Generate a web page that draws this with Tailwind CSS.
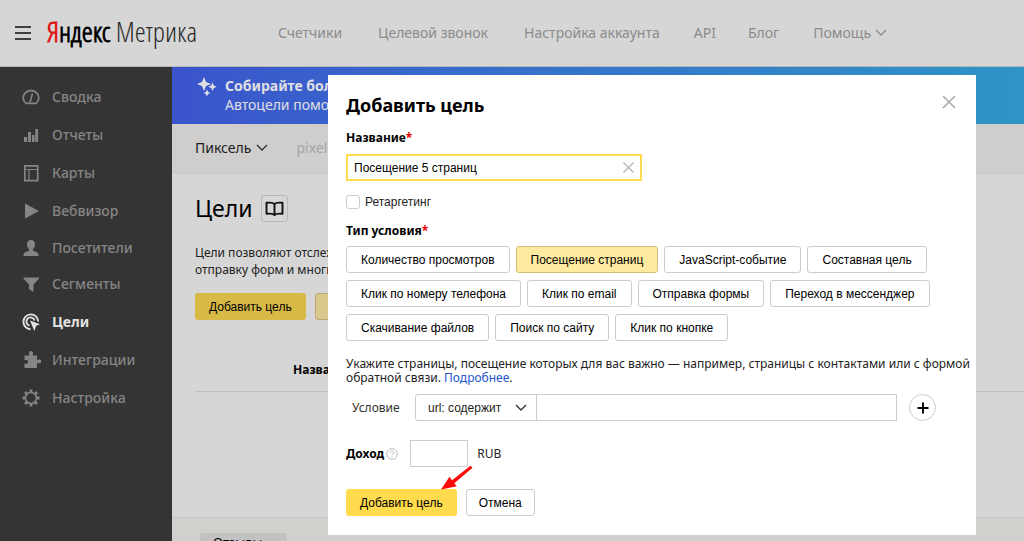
<!DOCTYPE html>
<html lang="ru">
<head>
<meta charset="utf-8">
<title>Яндекс Метрика — Цели</title>
<meta name="viewport" content="width=device-width, initial-scale=1">
<script src="https://cdn.jsdelivr.net/npm/@tailwindcss/browser@4"></script>
</head>
<body class="relative flex h-screen flex-col overflow-hidden bg-[#d6d6d6] font-['Noto_Sans','Open_Sans',sans-serif] text-xs text-black">

<header class="flex h-[67px] shrink-0 items-center border-b border-[#b4b8ba] pl-[15px]">
  <button type="button" aria-label="Меню" class="mr-4">
    <svg class="block" width="16" height="16" viewBox="0 0 16 16" stroke="#0c0c0c" stroke-width="1.7"><path d="M0 2h16M0 8h16M0 14h16"/></svg>
  </button>
  <a href="#" class="mb-1 w-[218px] shrink-0 whitespace-nowrap font-['Noto_Sans_ExtraCondensed','Open_Sans_Condensed_Light','Liberation_Sans_Narrow',sans-serif] text-[28px] leading-8 text-[#2a2a2a]"><span class="font-semibold text-black"><span class="text-[#e01818]">Я</span>ндекс</span> <span class="font-light">Метрика</span></a>
  <nav class="flex items-center whitespace-nowrap text-sm text-[#8b8b8b]">
    <a href="#" class="ml-[13px]">Счетчики</a>
    <a href="#" class="ml-9">Целевой звонок</a>
    <a href="#" class="ml-9">Настройка аккаунта</a>
    <a href="#" class="ml-[34px]">API</a>
    <a href="#" class="ml-8">Блог</a>
    <a href="#" class="ml-[34px] flex items-center gap-1">Помощь
      <svg width="12" height="8" viewBox="0 0 12 8" fill="none" stroke="#8b8b8b" stroke-width="1.3"><path d="M1 1l5 5 5-5"/></svg></a>
  </nav>
</header>

<div class="flex min-h-0 flex-1">
  <aside class="w-[172px] shrink-0 bg-[#343434] pt-[11px]">
    <nav class="flex flex-col text-sm font-medium text-[#858585]">
      <a href="#" class="flex h-[38px] items-center gap-3 pl-[22px]">
        <svg width="18" height="18" viewBox="0 0 18 18" fill="none" stroke="currentColor" stroke-width="1.8"><path d="M4 15.400A7.800 7.300 0 1 1 14 15.400Z" stroke-linejoin="round"/><path d="M8 14.5L10.5 5.5" stroke-width="1.6"/></svg>Сводка</a>
      <a href="#" class="flex h-[38px] items-center gap-3 pl-[22px]">
        <svg width="18" height="18" viewBox="0 0 18 18" fill="currentColor"><path d="M2 11h3v5H2zM6 6h3v10H6zM10 9h2.6v7H10zM13.3 3H16v13h-2.700z"/></svg>Отчеты</a>
      <a href="#" class="flex h-[38px] items-center gap-3 pl-[22px]">
        <svg width="18" height="18" viewBox="0 0 18 18" fill="none" stroke="currentColor"><path d="M2.800 1.800h12.900v14.900H2.800z" stroke-width="1.7"/><path d="M2 5.500h14M7 5.500V16" stroke-width="1.200"/></svg>Карты</a>
      <a href="#" class="flex h-[38px] items-center gap-3 pl-[22px]">
        <svg width="18" height="18" viewBox="0 0 18 18" fill="currentColor"><path d="M3 1.500L17 9 3 16.500z"/></svg>Вебвизор</a>
      <a href="#" class="flex h-9 items-center gap-3 pl-[22px]">
        <svg width="18" height="18" viewBox="0 0 18 18" fill="currentColor"><path d="M9 1c2.500 0 4 1.600 4 4.200 0 2-.8 3.800-2 4.800v1.600c0 .8 5.500 1.200 5.500 4.400v1h-15v-1C1.500 12.800 7 12.400 7 11.600V10C5.800 9 5 7.200 5 5.200 5 2.600 6.500 1 9 1z"/></svg>Посетители</a>
      <a href="#" class="flex h-9 items-center gap-3 pl-[22px]">
        <svg width="18" height="18" viewBox="0 0 18 18" fill="currentColor"><path d="M1.500 2.500h15.500v1L11.500 9.500v7.500L7 14V9.500L1.500 3.500z"/></svg>Сегменты</a>
      <a href="#" aria-current="page" class="mt-px flex h-[38px] items-center gap-3 pl-[22px] font-bold text-[#e2e2e2]">
        <svg width="18" height="18" viewBox="0 0 18 18" fill="none" stroke="currentColor" stroke-width="1.900"><path d="M8.500 16.200A7.400 7.400 0 1 1 16.200 8.500"/><path d="M7.500 12.700A4.200 4.200 0 1 1 12.600 7.500"/><path d="M8 7.500l10 3.800-3.800 1.500L12.300 18z" fill="currentColor" stroke="none"/></svg>Цели</a>
      <a href="#" class="flex h-[38px] items-center gap-3 pl-[22px]">
        <svg width="19" height="18" viewBox="0 0 19 18" class="-mr-px" fill="currentColor"><path d="M2.500 4.500h4.700V3.200a2.100 2.100 0 1 1 3.600 0v1.300H15v4.200h1.300a2 2 0 1 1 0 3.400H15v4.900H2.500v-4.300h1.700a1.900 1.900 0 1 0 0-3.800H2.500z"/></svg>Интеграции</a>
      <a href="#" class="flex h-[38px] items-center gap-3 pl-[22px]">
        <svg width="18" height="18" viewBox="0 0 18 18" fill="none" stroke="currentColor"><circle cx="9" cy="9" r="5.500" stroke-width="1.600"/><path d="M9 .5v3M9 14.500v3M.5 9h3M14.500 9h3M3 3l2 2M13 13l2 2M3 15l2-2M13 5l2-2" stroke-width="2.800"/></svg>Настройка</a>
    </nav>
  </aside>

  <main class="flex min-w-0 flex-1 flex-col whitespace-nowrap">
    <section class="flex h-[57px] shrink-0 gap-2 bg-linear-to-r from-[#3b54cc] to-[#2f94c6] pt-[9px] pl-[25px] text-sm leading-[19px] text-[#e0e0e4]">
      <svg class="mt-px" width="20" height="20" viewBox="0 0 20 20" fill="currentColor"><path d="M7 0l2 5 5 2-5 2-2 5-2-5-5-2 5-2zM15.500 5.500l1.300 3 3 1.300-3 1.300-1.300 3-1.300-3-3-1.300 3-1.300zM10 12.500l1.100 2.400 2.400 1.100-2.400 1.100L10 19.500l-1.100-2.400L6.500 16l2.400-1.100z"/></svg>
      <p><b>Собирайте больше</b><br>Автоцели помогут</p>
    </section>
    <section class="flex h-[50px] shrink-0 items-center border-b border-[#c9c9c9] bg-[#cfcecd] pb-px pl-[23px] text-sm">
      <button type="button" class="flex items-center gap-[5px] text-[#1c1c1c]">Пиксель
        <svg width="12" height="8" viewBox="0 0 12 8" fill="none" stroke="#333" stroke-width="1.400"><path d="M1 1l5 5 5-5"/></svg></button>
      <span class="ml-7 text-[#a5a5a5]">pixel</span>
    </section>
    <div class="flex-1 pt-5 pl-[23px]">
      <div class="flex items-center gap-[9px]">
        <h1 class="text-[23px] leading-7">Цели</h1>
        <button type="button" aria-label="Документация" class="flex size-[27px] items-center justify-center rounded-[3px] border border-[#b9b9b9]">
          <svg width="19" height="15" viewBox="0 0 19 15" fill="none" stroke="#111" stroke-width="1.900" stroke-linejoin="round"><path d="M9.500 3C8 1.500 4 1.500 1.500 1.800v11c2.500-.3 6.500-.3 8 1.200 1.500-1.500 5.500-1.500 8-1.200v-11C15 1.500 11 1.500 9.500 3zM9.500 3v10.500"/></svg></button>
      </div>
      <p class="mt-[22px] text-xs leading-[17px] text-[#222]">Цели позволяют отслеживать<br>отправку форм и многие</p>
      <div class="mt-[15px] flex gap-[9px] font-['Liberation_Sans',sans-serif]">
        <button type="button" class="h-[27px] rounded-[3px] bg-[#d8b945] px-[14px]">Добавить цель</button>
        <button type="button" aria-label="Импорт целей" class="h-[27px] w-24 rounded-[3px] border border-[#bca675] bg-[#d8c88c]"></button>
      </div>
      <table class="mt-[35px] w-full border-b border-[#bfbfbf]">
        <thead><tr><th scope="col" class="h-9 pl-[98px] pb-[6px] text-left text-xs font-bold">Название</th></tr></thead>
      </table>
    </div>
    <footer class="h-6 shrink-0 border-t border-[#c4c4c0] bg-[#d0d0cc] pt-[15px] pl-7">
      <div class="flex h-6 w-[87px] rounded-[3px] bg-[#c3c2c2] px-[13px] pt-px text-[13px]">Отзывы</div>
    </footer>
  </main>
</div>

<div role="dialog" aria-labelledby="dlg" class="absolute top-[75px] right-12 left-[328px] bg-white px-[18px] pb-[19px]">
  <div class="flex items-center justify-between pt-[15px]">
    <h2 id="dlg" class="text-lg leading-[30px] font-bold">Добавить цель</h2>
    <button type="button" aria-label="Закрыть" class="-mt-[6px]"><svg width="16" height="16" viewBox="0 0 16 16" stroke="#aaa" stroke-width="1.600"><path d="M1 2l12 12M13 2L1 14"/></svg></button>
  </div>
  <form>
    <label for="name" class="mt-[9px] block leading-[18px] font-bold">Название<span class="text-[#e00]">*</span></label>
    <div class="relative mt-[7px] w-[296px]">
      <input id="name" type="text" value="Посещение 5 страниц" class="block h-[27px] w-full border-2 border-[#ffdb4d] bg-white px-[6px] font-['Liberation_Sans',sans-serif] text-xs outline-none">
      <button type="button" aria-label="Очистить" class="absolute top-2 right-2"><svg class="block" width="11" height="11" viewBox="0 0 11 11" stroke="#b0b0b0" stroke-width="1.100"><path d="M.5.5l10 10M10.500.5l-10 10"/></svg></button>
    </div>
    <div class="mt-3 flex h-[18px] items-center gap-[5px] font-['Liberation_Sans',sans-serif] text-[#222]">
      <input id="ret" type="checkbox" class="size-[14px] appearance-none rounded-[3px] border border-[#ccc] bg-white">
      <label for="ret">Ретаргетинг</label>
    </div>
    <h3 class="mt-[11px] leading-[18px] font-bold">Тип условия<span class="text-[#e00]">*</span></h3>
    <div class="mt-[6px] mr-5 flex flex-wrap gap-x-[6px] gap-y-[7px] font-['Liberation_Sans',sans-serif]">
      <button type="button" class="h-[27px] rounded-[3px] border border-[#ccc] px-[14px]">Количество просмотров</button>
      <button type="button" aria-pressed="true" class="h-[27px] rounded-[3px] border border-[#d5bd78] bg-[#ffeba0] px-[14px]">Посещение страниц</button>
      <button type="button" class="h-[27px] rounded-[3px] border border-[#ccc] px-[14px]">JavaScript-событие</button>
      <button type="button" class="h-[27px] rounded-[3px] border border-[#ccc] px-[14px]">Составная цель</button>
      <button type="button" class="h-[27px] rounded-[3px] border border-[#ccc] px-[14px]">Клик по номеру телефона</button>
      <button type="button" class="h-[27px] rounded-[3px] border border-[#ccc] px-[14px]">Клик по email</button>
      <button type="button" class="h-[27px] rounded-[3px] border border-[#ccc] px-[14px]">Отправка формы</button>
      <button type="button" class="h-[27px] rounded-[3px] border border-[#ccc] px-[14px]">Переход в мессенджер</button>
      <button type="button" class="h-[27px] rounded-[3px] border border-[#ccc] px-[14px]">Скачивание файлов</button>
      <button type="button" class="h-[27px] rounded-[3px] border border-[#ccc] px-[14px]">Поиск по сайту</button>
      <button type="button" class="h-[27px] rounded-[3px] border border-[#ccc] px-[14px]">Клик по кнопке</button>
    </div>
    <p class="mt-4 -mr-4 leading-[14px] text-[#222]">Укажите страницы, посещение которых для вас важно — например, страницы с контактами или с формой обратной связи. <a href="#" class="text-[#2255cc]">Подробнее</a>.</p>
    <div class="mt-[9px] flex items-center pr-[22px]">
      <label for="cond" class="w-[69px] shrink-0 pl-[6px] text-[#333]">Условие</label>
      <div class="relative">
        <select id="cond" class="block h-[27px] w-[122px] appearance-none rounded-l-[3px] border border-[#ccc] bg-white pl-3 font-['Liberation_Sans',sans-serif] text-xs text-[#222]"><option>url: содержит</option></select>
        <svg class="pointer-events-none absolute top-[10px] right-[10px]" width="12" height="8" viewBox="0 0 12 8" fill="none" stroke="#333" stroke-width="1.400"><path d="M1 1l5 5 5-5"/></svg>
      </div>
      <input type="text" aria-label="Значение условия" class="-ml-px h-[27px] min-w-0 flex-1 border border-[#ccc] bg-white px-2">
      <button type="button" aria-label="Добавить условие" class="ml-3 flex size-[27px] items-center justify-center rounded-full border border-[#ccc]"><svg width="12" height="12" viewBox="0 0 12 12" stroke="#000" stroke-width="1.900"><path d="M6 .5v11M.5 6h11"/></svg></button>
    </div>
    <div class="mt-[19px] flex items-center">
      <label for="income" class="font-bold">Доход</label>
      <svg class="ml-[2px]" width="12" height="12" viewBox="0 0 12 12" fill="none" stroke="#bbb" stroke-width="1"><circle cx="6" cy="6" r="5.300"/><path d="M4.400 4.800c0-2 3.200-2 3.200 0 0 1.100-1.600 1.100-1.600 2.300M6 8.200v1"/></svg>
      <input id="income" type="text" class="ml-3 h-[27px] w-[58px] border border-[#ccc] bg-white px-2">
      <span class="ml-[9px] text-[#222]">RUB</span>
    </div>
    <div class="relative mt-[22px] flex gap-[9px] font-['Liberation_Sans',sans-serif]">
      <button type="submit" class="h-[27px] rounded-[3px] bg-[#ffdb4d] px-[14px]">Добавить цель</button>
      <button type="button" class="h-[27px] rounded-[3px] border border-[#ccc] px-3">Отмена</button>
      <svg class="pointer-events-none absolute -top-6 left-[95px]" width="32" height="26" viewBox="0 0 32 26" fill="#ff0a0a"><path d="M0 24.500L8.500 11.800 11 15.200 29.500.7l2 2L13.300 18.200l2.500 3z"/></svg>
    </div>
  </form>
</div>
</body>
</html>
